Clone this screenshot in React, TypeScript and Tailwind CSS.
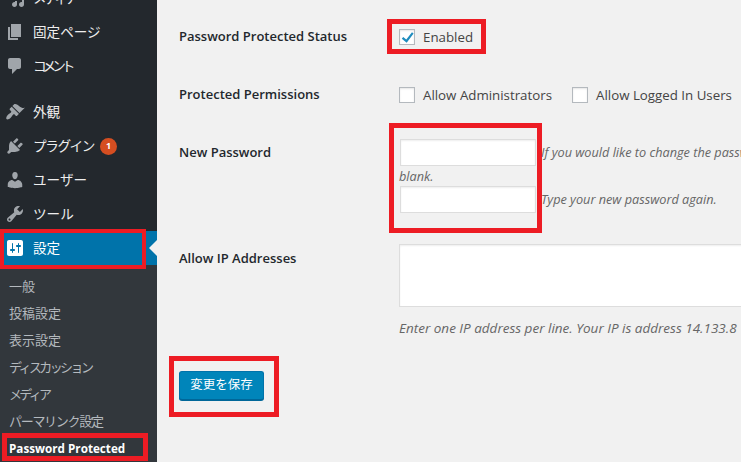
import React from 'react';

const FONT = "font-['Open_Sans','Noto_Sans_CJK_JP',sans-serif]";

// dashicons-style paths, viewBox 0 0 20 20
const ICONS: Record<string, string> = {
  media: 'M13 11V4c0-.55-.45-1-1-1h-1.67L9 1H5L3.67 3H2c-.55 0-1 .45-1 1v7c0 .55.45 1 1 1h10c.55 0 1-.45 1-1zM7 4.5c1.38 0 2.5 1.12 2.5 2.5S8.38 9.5 7 9.5 4.5 8.38 4.5 7 5.62 4.5 7 4.5zM14 6h5v10.5c0 1.38-1.12 2.5-2.5 2.5S14 17.88 14 16.5s1.12-2.5 2.5-2.5c.17 0 .34.02.5.05V9h-3V6zm-4 8.05V13h2v3.5c0 1.38-1.12 2.5-2.5 2.5S7 17.88 7 16.5 8.12 14 9.5 14c.17 0 .34.02.5.05z',
  page: 'M6 15V2h10v13H6zm-1 1h8v2H3V5h2v11z',
  comment: 'M5 2h9c1.1 0 2 .9 2 2v7c0 1.1-.9 2-2 2h-2l-5 5v-5H5c-1.1 0-2-.9-2-2V4c0-1.1.9-2 2-2z',
  brush: 'M14.5 11 7.4 4l1.5-1.5c.5-.6 2.3-.5 3.5.3 1.2.8 1.4 1.3 2.9 2.1 1.2.6 2.5 1.3 4.5.9L14.5 11zm-.7.7L6.700 4.700 4.900 6.500c-.4.4-.4 1 0 1.400l1.100 1.100c.4.4.4 1 0 1.400-.6.6-1.400 1.100-2.200 1.700-.4.3-.7.5-1 .8-1.300 1.300-2 3.500-1.300 4.200.7.7 2.900 0 4.200-1.300.3-.3.5-.6.8-1 .6-.8 1.100-1.600 1.700-2.200.4-.4 1-.4 1.400 0l1.100 1.100c.4.4 1 .4 1.400 0l1.700-1.800z',
  plug: 'M13.11 4.36L9.87 7.6 8 5.73l3.24-3.24c.35-.34 1.05-.2 1.56.32.52.51.66 1.21.31 1.55zm-8 1.77l.91-1.12 9.01 9.01-1.19.84c-.71.71-2.63 1.16-3.82 1.16H6.14L4.9 17.26c-.59.59-1.54.59-2.12 0-.59-.58-.59-1.53 0-2.12l1.24-1.24v-3.88c0-1.13.4-3.19 1.09-3.89zm7.26 3.97l3.24-3.24c.34-.35 1.04-.21 1.55.31.52.51.66 1.21.31 1.55l-3.24 3.25z',
  user: 'M10 9.25c-2.27 0-2.73-3.44-2.73-3.44C7 4.02 7.82 2 9.97 2c2.16 0 2.98 2.02 2.71 3.81 0 0-.41 3.44-2.68 3.44zm0 2.57L12.72 10c2.39 0 4.52 2.33 4.52 4.53v2.49s-3.65 1.13-7.24 1.13c-3.65 0-7.24-1.13-7.24-1.13v-2.49c0-2.25 1.94-4.48 4.47-4.48z',
  tool: 'M16.68 9.77c-1.34 1.34-3.3 1.67-4.95.99l-5.41 6.52c-.99.99-2.59.99-3.58 0s-.99-2.59 0-3.57l6.52-5.42c-.68-1.65-.35-3.61.99-4.95 1.28-1.28 3.12-1.62 4.72-1.06l-2.89 2.89 2.82 2.82 2.86-2.87c.53 1.58.18 3.39-1.08 4.65zM3.81 16.21c.4.39 1.04.39 1.43 0 .4-.4.4-1.04 0-1.43-.39-.4-1.03-.4-1.43 0-.39.39-.39 1.03 0 1.43z',
  settings: 'M18 16V4c0-1.1-.9-2-2-2H4c-1.1 0-2 .9-2 2v12c0 1.1.9 2 2 2h12c1.1 0 2-.9 2-2zM8 11h1c.55 0 1 .45 1 1s-.45 1-1 1H8v1.5c0 .28-.22.5-.5.5s-.5-.22-.5-.5V13H6c-.55 0-1-.45-1-1s.45-1 1-1h1V5.5c0-.28.22-.5.5-.5s.5.22.5.5V11zm5-2h-1c-.55 0-1-.45-1-1s.45-1 1-1h1V5.500c0-.28.22-.5.5-.5s.5.22.5.5V7h1c.55 0 1 .45 1 1s-.45 1-1 1h-1v5.500c0 .28-.22.5-.5.5s-.5-.22-.5-.5V9z',
};

const Icon = ({ name, className }: { name: string; className: string }) => (
  <svg viewBox="0 0 20 20" className={`h-5 w-5 shrink-0 fill-current ${className}`}>
    <path d={ICONS[name]} />
  </svg>
);

type MenuItemProps = { icon: string; label: string; badge?: string; active?: boolean; tracking?: string };

const MenuItem = ({ icon, label, badge, active, tracking = '' }: MenuItemProps) => (
  <div className="flex h-[34px] items-center pl-[5px] text-[13.6px] text-[#eeeeee]">
    <Icon name={icon} className={active ? 'text-white' : 'text-[#a0a5aa]'} />
    <span className={`ml-[8px] ${active ? 'text-white' : ''} ${tracking}`}>{label}</span>
    {badge && (
      <span className="ml-[6px] flex h-[17px] w-[17px] items-center justify-center rounded-full bg-[#d54e21] text-[9px] font-bold text-white">
        {badge}
      </span>
    )}
  </div>
);

const SubItem = ({ label, tracking = '' }: { label: string; tracking?: string }) => (
  <div className={`flex h-[27px] items-center pl-[9px] text-[13px] text-[#b4b9be] ${tracking}`}>{label}</div>
);

const Check = ({ label, checked }: { label: string; checked?: boolean }) => (
  <label className="flex items-center text-[13.3px] text-[#444444]">
    <span className="relative h-4 w-4 border border-[#b4b9be] bg-white shadow-[inset_0_1px_2px_rgba(0,0,0,0.1)]">
      {checked && (
        <svg viewBox="0 0 16 16" className="absolute left-[1px] top-[1px] h-[13px] w-[13px] fill-[#1e8cbe]">
          <path d="M13.5 1.500 15.500 3 7 14.500 1 9.500 2.700 7.300 6.500 10.500z" />
        </svg>
      )}
    </span>
    <span className="ml-2 pt-[1px]">{label}</span>
  </label>
);

const Row = ({ label, className, children }: { label: string; className: string; children: React.ReactNode }) => (
  <div className={`flex ${className}`}>
    <div className="w-[220px] shrink-0 pt-[20px] text-[13px] font-semibold leading-[18px] text-[#23282d]">{label}</div>
    <div className="min-w-0 flex-1">{children}</div>
  </div>
);

const PasswordField = ({ hint }: { hint: string }) => (
  <div className="flex items-center whitespace-nowrap">
    <div className="ml-[1px] h-[27px] w-[136px] shrink-0 border border-[#dddddd] bg-white shadow-[inset_0_1px_2px_rgba(0,0,0,0.07)]" />
    <span className="ml-[5px] text-[12.7px] italic text-[#666666]">{hint}</span>
  </div>
);

const RED_BOXES = [
  'left-0 top-[229px] h-[40px] w-[146px] border-[4px]',
  'left-[2px] top-[433px] h-[28px] w-[146px] border-[5px]',
  'left-[387px] top-[19px] h-[35px] w-[99px] border-[5px]',
  'left-[389px] top-[123px] h-[110px] w-[153px] border-[5px]',
  'left-[169px] top-[356px] h-[61px] w-[110px] border-[5px]',
];

export default function App() {
  return (
    <div className={`relative flex h-[462px] w-[741px] overflow-hidden bg-[#f1f1f1] ${FONT}`}>
      <aside className="w-[157px] shrink-0 bg-[#23282d]">
        <div className="-mt-[19px]">
          <MenuItem icon="media" label="メディア" tracking="tracking-[-2.5px]" />
          <MenuItem icon="page" label="固定ページ" />
          <MenuItem icon="comment" label="コメント" tracking="tracking-[-4px]" />
          <div className="h-3" />
          <MenuItem icon="brush" label="外観" />
          <MenuItem icon="plug" label="プラグイン" badge="1" tracking="tracking-[-1.4px]" />
          <MenuItem icon="user" label="ユーザー" />
          <MenuItem icon="tool" label="ツール" />
          <div className="relative bg-[#0073aa]">
            <MenuItem icon="settings" label="設定" active />
            <span className="absolute right-0 top-[9px] border-y-[8px] border-r-[8px] border-y-transparent border-r-[#f1f1f1]" />
          </div>
          <div className="bg-[#32373c] pb-4 pt-[8px]">
            <SubItem label="一般" />
            <SubItem label="投稿設定" />
            <SubItem label="表示設定" />
            <SubItem label="ディスカッション" tracking="tracking-[-2.6px]" />
            <SubItem label="メディア" tracking="tracking-[-2.7px]" />
            <SubItem label="パーマリンク設定" tracking="tracking-[-1.3px]" />
            <div className="flex h-[27px] items-center pl-[9px] text-[11.7px] font-bold text-white">Password Protected</div>
          </div>
        </div>
      </aside>

      <main className="min-w-0 flex-1 pl-[22px] pt-[7px]">
        <Row label="Password Protected Status" className="h-[58px]">
          <div className="pt-[20px]">
            <Check label="Enabled" checked />
          </div>
        </Row>
        <Row label="Protected Permissions" className="h-[58px]">
          <div className="flex gap-[20px] whitespace-nowrap pt-[20px]">
            <Check label="Allow Administrators" />
            <Check label="Allow Logged In Users" />
          </div>
        </Row>
        <Row label="New Password" className="h-[106px]">
          <div className="pt-[16px]">
            <PasswordField hint="If you would like to change the password type a new one. Otherwise leave this" />
            <div className="h-[20px] text-[12.7px] italic leading-[20px] text-[#666666]">blank.</div>
            <PasswordField hint="Type your new password again." />
          </div>
        </Row>
        <Row label="Allow IP Addresses" className="h-[127px]">
          <div className="pt-[15px]">
            <div className="h-[63px] w-[500px] border border-[#dddddd] bg-white shadow-[inset_0_1px_2px_rgba(0,0,0,0.07)]" />
            <p className="mt-[11px] whitespace-nowrap text-[13.5px] italic text-[#666666]">
              Enter one IP address per line. Your IP is address 14.133.8
            </p>
          </div>
        </Row>
        <button className="mt-[15px] h-[29px] w-[85px] rounded-[3px] border border-[#0073aa] border-b-[#006799] bg-[#0085ba] text-[12.5px] text-white shadow-[0_1px_0_#006799]">
          変更を保存
        </button>
      </main>

      {RED_BOXES.map((box) => (
        <div key={box} className={`absolute border-[#ed1c24] ${box}`} />
      ))}
    </div>
  );
}
